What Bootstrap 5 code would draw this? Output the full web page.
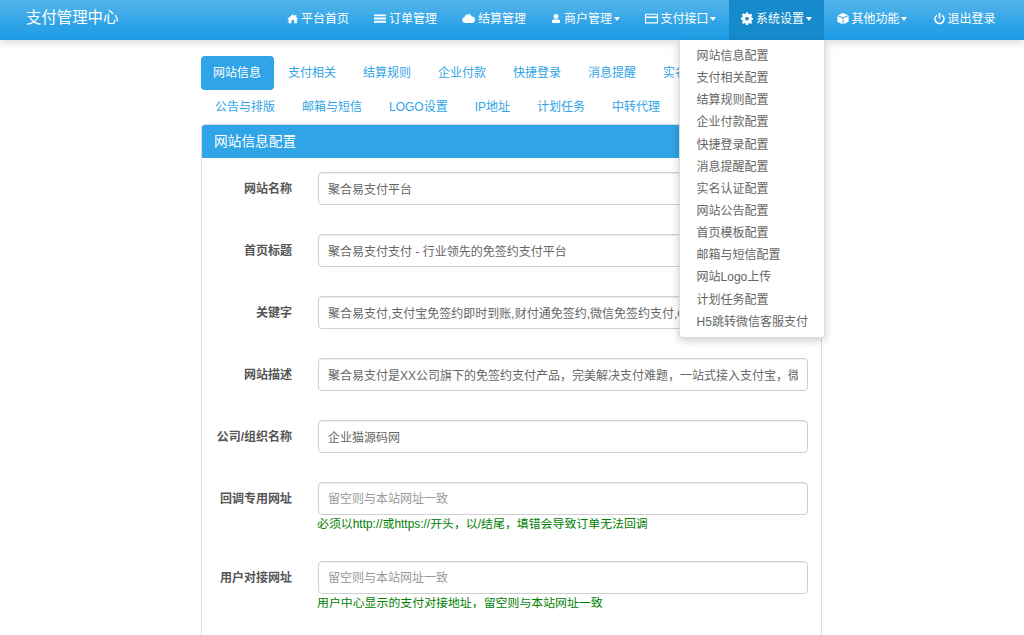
<!DOCTYPE html>
<html lang="zh-CN">
<head>
<meta charset="utf-8">
<link href="https://cdn.jsdelivr.net/npm/bootstrap@5.3.0/dist/css/bootstrap.min.css" rel="stylesheet">
<style>
html,body{height:635px;overflow:hidden}
body{font-family:"Liberation Sans","Noto Sans CJK SC",sans-serif;font-size:12px;color:#555;background:#fff}
.topbar{height:40px;background:linear-gradient(#54b4eb,#2fa4e7 60%,#1d9ce5);box-shadow:0 1px 10px rgba(0,0,0,.2);padding:0 0 0 26px;position:relative;z-index:5}
.brandname{font-size:15.4px;color:#fff;line-height:36px;width:248px;flex:none}
.topnav{display:flex;margin:0;padding:0;list-style:none}
.topnav>li{position:relative}
.topnav>li>a{display:flex;align-items:center;height:40px;padding:0 12.5px 3px;color:#fff;text-decoration:none;font-size:12px;white-space:nowrap}
.topnav>li.on>a{background:#178acc}
.topnav svg{height:13px;fill:#fff;margin-right:3px;flex:none}
.ic-home{width:11.5px}.ic-list{width:12px}.ic-cloud{width:13px}.ic-user{width:10px}
.ic-card{width:13px}.ic-gear{width:12px}.ic-cube{width:12px}
.topnav .ic-power{width:11px;margin-left:1.500px}
.caretdown{display:inline-block;border-top:4px solid #fff;border-left:3.5px solid transparent;border-right:3.5px solid transparent;margin-left:1.500px}
.dropbox{position:absolute;top:40px;left:-50px;width:146px;background:#fff;border:1px solid #ddd;border-top:0;border-radius:0 0 4px 4px;box-shadow:0 3px 8px rgba(0,0,0,.2);padding:5px 0 4px;margin:0;list-style:none}
.dropbox a{display:block;padding:0 16px 0 17px;height:22.15px;line-height:22px;color:#666;text-decoration:none;font-size:12px;white-space:nowrap}
.pagecol{width:621px;margin:16px 0 0 201px}
.tabrow{display:flex;flex-wrap:wrap;margin:0;padding:0;list-style:none}
.tabrow li+li{margin-left:2px}
.tabrow a{display:block;height:34px;line-height:35px;padding:0 13px 0 12px;color:#2fa4e7;text-decoration:none;font-size:12px;border-radius:4px;white-space:nowrap}
.tabrow .active a{background:#2fa4e7;color:#fff}
.confpanel{border:1px solid #ddd;border-bottom:0;border-radius:4px 4px 0 0;height:520px;overflow:hidden}
.confhead{background:#2fa4e7;color:#fff;font-size:13.7px;height:33px;line-height:33px;padding:0 12px}
.confbody{padding:14px 13px 0 0}
.frow{display:flex;height:62px}
.frow.hinted{height:79px}
.flabel{width:90px;flex:none;text-align:right;font-weight:700;line-height:33px;padding-top:1px;color:#555;font-size:12px;margin-right:26px;white-space:nowrap}
.ffield{flex:1;min-width:0}
.finput{height:33px;border:1px solid #d0d0d0;border-radius:4px;padding:6px 9px;font-size:12px;color:#666;box-shadow:inset 0 1px 1px rgba(0,0,0,.075);width:100%}
.finput::placeholder{color:#999;opacity:1}
.fhint{color:#008000;font-size:11.92px;line-height:15px;margin:2px 0 0 -1px;white-space:nowrap}
</style>
</head>
<body>
<nav class="topbar d-flex">
  <div class="brandname">支付管理中心</div>
  <ul class="topnav">
    <li><a href="#"><svg class="ic-home" viewBox="0 0 16 16"><path d="M8 2 0 9h2.2v5.500h4V10h3.600v4.500h4V9H16l-3-2.600V3h-2v1.600z"/></svg>平台首页</a></li>
    <li><a href="#"><svg class="ic-list" viewBox="0 0 16 16"><path d="M0 2.500h16v2.600H0zM0 6.700h16v2.600H0zM0 10.900h16v2.600H0z"/></svg>订单管理</a></li>
    <li><a href="#"><svg class="ic-cloud" viewBox="0 0 16 16"><path d="M3.800 13.500a3.700 3.700 0 0 1-.7-7.300A4.700 4.700 0 0 1 12 5.500a4 4 0 0 1 .2 8z"/></svg>结算管理</a></li>
    <li><a href="#"><svg class="ic-user" viewBox="0 0 16 16"><path d="M8 1a3.800 3.800 0 0 1 3.800 4.100C11.700 6.900 10.700 8.500 8 8.500S4.300 6.900 4.200 5.100A3.800 3.800 0 0 1 8 1zM4.800 9c1.900 1 4.500 1 6.400 0 2.300.4 3.300 1.500 3.300 3.500V15h-13v-2.500C1.500 10.500 2.500 9.400 4.800 9z"/></svg>商户管理<i class="caretdown"></i></a></li>
    <li><a href="#"><svg class="ic-card" viewBox="0 0 16 16"><path fill-rule="evenodd" d="M0 2h16v12H0zM1.300 3.300v2.200h13.400V3.300zM1.300 7.500v5.200h13.400V7.500z"/></svg>支付接口<i class="caretdown"></i></a></li>
    <li class="on"><a href="#"><svg class="ic-gear" viewBox="0 0 16 16"><path fill-rule="evenodd" d="M6.600 0h2.800l.4 2.100 1.300.5 1.800-1.200 2 2-1.200 1.800.5 1.300 2.100.4v2.800l-2.100.4-.5 1.300 1.200 1.800-2 2-1.800-1.200-1.300.5-.4 2.100H6.600l-.4-2.100-1.300-.5-1.800 1.200-2-2 1.200-1.800-.5-1.300L-.200 9.400V6.600l2.100-.4.5-1.300-1.200-1.800 2-2 1.800 1.200 1.300-.5zM8 5.500a2.500 2.500 0 1 0 0 5 2.500 2.500 0 0 0 0-5z"/></svg>系统设置<i class="caretdown"></i></a>
      <ul class="dropbox">
        <li><a href="#">网站信息配置</a></li>
        <li><a href="#">支付相关配置</a></li>
        <li><a href="#">结算规则配置</a></li>
        <li><a href="#">企业付款配置</a></li>
        <li><a href="#">快捷登录配置</a></li>
        <li><a href="#">消息提醒配置</a></li>
        <li><a href="#">实名认证配置</a></li>
        <li><a href="#">网站公告配置</a></li>
        <li><a href="#">首页模板配置</a></li>
        <li><a href="#">邮箱与短信配置</a></li>
        <li><a href="#">网站Logo上传</a></li>
        <li><a href="#">计划任务配置</a></li>
        <li><a href="#">H5跳转微信客服支付</a></li>
      </ul>
    </li>
    <li><a href="#"><svg class="ic-cube" viewBox="0 0 16 16"><path d="M8 .500l7 3L8 6.400 1 3.500zM.500 4.800l6.900 2.900v7.800L.500 12.300zM15.500 4.800v7.500l-6.900 3.200V7.700z"/></svg>其他功能<i class="caretdown"></i></a></li>
    <li><a href="#"><svg class="ic-power" viewBox="0 0 16 16"><path d="M6.800 0h2.400v8H6.800z"/><path d="M4.300 2v2.700a5.300 5.300 0 1 0 7.400 0V2a7.700 7.700 0 1 1-7.400 0z"/></svg>退出登录</a></li>
  </ul>
</nav>
<main class="pagecol">
  <ul class="tabrow">
    <li class="active"><a href="#">网站信息</a></li>
    <li><a href="#">支付相关</a></li>
    <li><a href="#">结算规则</a></li>
    <li><a href="#">企业付款</a></li>
    <li><a href="#">快捷登录</a></li>
    <li><a href="#">消息提醒</a></li>
    <li><a href="#">实名认证</a></li>
    <li><a href="#">网站公告</a></li>
    <li><a href="#">公告与排版</a></li>
    <li><a href="#">邮箱与短信</a></li>
    <li><a href="#">LOGO设置</a></li>
    <li><a href="#">IP地址</a></li>
    <li><a href="#">计划任务</a></li>
    <li><a href="#">中转代理</a></li>
  </ul>
  <section class="confpanel">
    <div class="confhead">网站信息配置</div>
    <form class="confbody">
      <div class="frow"><label class="flabel">网站名称</label><div class="ffield"><input class="finput" value="聚合易支付平台"></div></div>
      <div class="frow"><label class="flabel">首页标题</label><div class="ffield"><input class="finput" value="聚合易支付支付 - 行业领先的免签约支付平台"></div></div>
      <div class="frow"><label class="flabel">关键字</label><div class="ffield"><input class="finput" value="聚合易支付,支付宝免签约即时到账,财付通免签约,微信免签约支付,QQ钱包免签约,免签约支付"></div></div>
      <div class="frow"><label class="flabel">网站描述</label><div class="ffield"><input class="finput" value="聚合易支付是XX公司旗下的免签约支付产品，完美解决支付难题，一站式接入支付宝，微信，财付通，QQ钱包"></div></div>
      <div class="frow"><label class="flabel">公司/组织名称</label><div class="ffield"><input class="finput" value="企业猫源码网"></div></div>
      <div class="frow hinted"><label class="flabel">回调专用网址</label><div class="ffield"><input class="finput" placeholder="留空则与本站网址一致"><div class="fhint">必须以http://或https://开头，以/结尾，填错会导致订单无法回调</div></div></div>
      <div class="frow hinted"><label class="flabel">用户对接网址</label><div class="ffield"><input class="finput" placeholder="留空则与本站网址一致"><div class="fhint">用户中心显示的支付对接地址，留空则与本站网址一致</div></div></div>
    </form>
  </section>
</main>
<script src="https://cdn.jsdelivr.net/npm/bootstrap@5.3.0/dist/js/bootstrap.bundle.min.js"></script>
</body>
</html>
